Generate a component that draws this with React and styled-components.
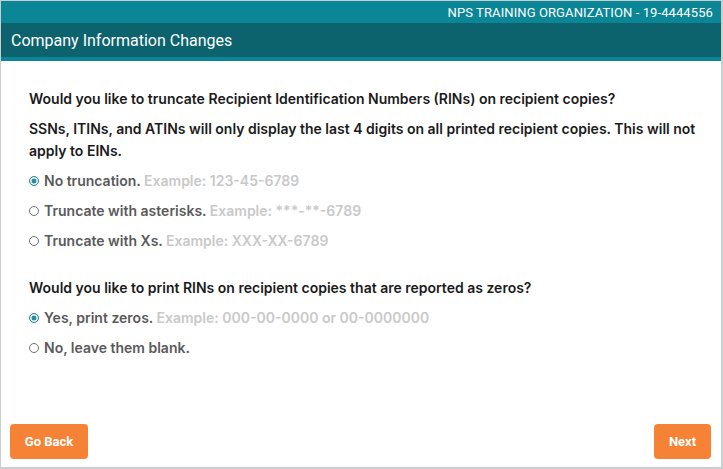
import React, { useState } from "react";
import styled, { createGlobalStyle } from "styled-components";

const Global = createGlobalStyle`
  html, body { margin: 0; padding: 0; background: #fff; }
  * { box-sizing: border-box; }
`;

const Frame = styled.div`
  width: 723px;
  height: 469px;
  display: flex;
  flex-direction: column;
  border: 1px solid #c9cfcf;
  border-right-width: 2px;
  border-bottom-width: 2px;
  background: #fff;
`;

const OrgBar = styled.div`
  height: 22px;
  background: #0a8696;
  color: #fff;
  font-family: Roboto, "Liberation Sans", sans-serif;
  font-size: 13px;
  display: flex;
  align-items: center;
  justify-content: flex-end;
  padding-right: 8px;
  letter-spacing: 0.1px;
`;

const TitleBar = styled.div`
  height: 38px;
  background: #0c636d;
  border-bottom: 4px solid #0a8696;
  color: #fff;
  font-family: Roboto, "Liberation Sans", sans-serif;
  font-size: 16px;
  display: flex;
  align-items: center;
  padding-left: 10px;
`;

const Content = styled.div`
  flex: 1;
  padding: 27px 20px 0 28px;
  font-family: Inter, "Noto Sans", sans-serif;
  font-size: 14px;
  line-height: 22px;
`;

const Section = styled.div`
  display: flex;
  flex-direction: column;
  gap: 8px;
  margin-bottom: 25px;
`;

const Question = styled.div`
  font-weight: 600;
  color: #1b1b1b;
`;

const OptionRow = styled.label`
  display: flex;
  align-items: center;
  gap: 4px;
  font-weight: 600;
  color: #5a5a5a;
  cursor: pointer;
`;

const Radio = styled.span`
  width: 10px;
  height: 10px;
  border-radius: 50%;
  flex: none;
  border: 1px solid ${(p) => (p.$checked ? "#2a8c9c" : "#6f6f6f")};
  background: ${(p) => (p.$checked ? "#2a8c9c" : "#fff")};
  box-shadow: ${(p) => (p.$checked ? "inset 0 0 0 1.5px #fff" : "none")};
  margin-right: 1px;
`;

const Example = styled.span`
  color: #c9c9c9;
  font-weight: 600;
`;

const Footer = styled.div`
  display: flex;
  justify-content: space-between;
  padding: 0 10px 8px 9px;
`;

const ActionButton = styled.button`
  height: 35px;
  min-width: ${(p) => p.$w}px;
  background: #f58235;
  color: #fff;
  border: none;
  border-radius: 4px;
  font-family: Roboto, "Liberation Sans", sans-serif;
  font-weight: 700;
  font-size: 13px;
  padding: 0 14px;
  cursor: pointer;
`;

function Option({ checked, label, example, onClick }) {
  return (
    <OptionRow onClick={onClick}>
      <Radio $checked={checked} />
      <span>
        {label}
        {example && <Example> {example}</Example>}
      </span>
    </OptionRow>
  );
}

export default function App() {
  const [trunc, setTrunc] = useState(0);
  const [zeros, setZeros] = useState(0);
  const truncOpts = [
    ["No truncation.", "Example: 123-45-6789"],
    ["Truncate with asterisks.", "Example: ***-**-6789"],
    ["Truncate with Xs.", "Example: XXX-XX-6789"],
  ];
  const zeroOpts = [
    ["Yes, print zeros.", "Example: 000-00-0000 or 00-0000000"],
    ["No, leave them blank.", null],
  ];
  return (
    <>
      <Global />
      <Frame>
        <OrgBar>NPS TRAINING ORGANIZATION - 19-4444556</OrgBar>
        <TitleBar>Company Information Changes</TitleBar>
        <Content>
          <Section>
            <Question>
              Would you like to truncate Recipient Identification Numbers (RINs) on recipient copies?
            </Question>
            <Question>
              SSNs, ITINs, and ATINs will only display the last 4 digits on all printed recipient copies. This will not apply to EINs.
            </Question>
            {truncOpts.map(([l, e], i) => (
              <Option key={i} checked={trunc === i} label={l} example={e} onClick={() => setTrunc(i)} />
            ))}
          </Section>
          <Section>
            <Question>Would you like to print RINs on recipient copies that are reported as zeros?</Question>
            {zeroOpts.map(([l, e], i) => (
              <Option key={i} checked={zeros === i} label={l} example={e} onClick={() => setZeros(i)} />
            ))}
          </Section>
        </Content>
        <Footer>
          <ActionButton $w={78}>Go Back</ActionButton>
          <ActionButton $w={57}>Next</ActionButton>
        </Footer>
      </Frame>
    </>
  );
}
